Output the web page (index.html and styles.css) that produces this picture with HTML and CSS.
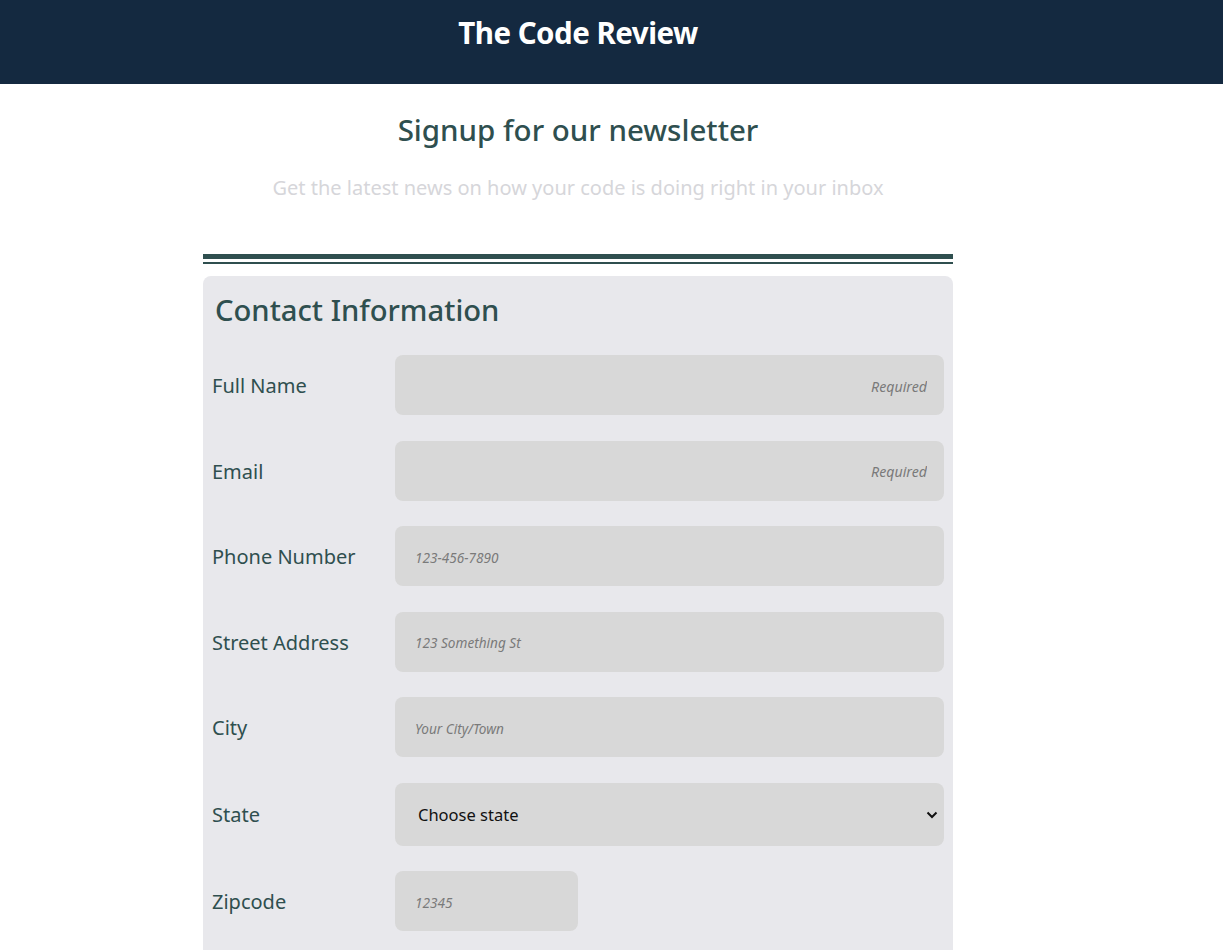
FILE: index.html
```html
<!DOCTYPE html>
<html lang="en">
<head>
<meta charset="utf-8">
<title>The Code Review</title>
<link rel="stylesheet" href="styles.css">
</head>
<body>
<header class="topbar">
  <div class="wrap">
    <h1 class="brand">The Code Review</h1>
  </div>
</header>
<main class="wrap">
  <section class="intro">
    <h2 class="intro-title">Signup for our newsletter</h2>
    <p class="intro-sub">Get the latest news on how your code is doing right in your inbox</p>
  </section>
  <div class="rule"></div>
  <form class="card">
    <h3 class="card-title">Contact Information</h3>
    <div class="row">
      <label class="label" for="name">Full Name</label>
      <input class="field req" id="name" type="text" placeholder="Required">
    </div>
    <div class="row">
      <label class="label" for="email">Email</label>
      <input class="field req" id="email" type="email" placeholder="Required">
    </div>
    <div class="row">
      <label class="label" for="phone">Phone Number</label>
      <input class="field" id="phone" type="tel" placeholder="123-456-7890">
    </div>
    <div class="row">
      <label class="label" for="street">Street Address</label>
      <input class="field" id="street" type="text" placeholder="123 Something St">
    </div>
    <div class="row">
      <label class="label" for="city">City</label>
      <input class="field" id="city" type="text" placeholder="Your City/Town">
    </div>
    <div class="row">
      <label class="label" for="state">State</label>
      <div class="select-wrap">
        <select class="field select" id="state">
          <option>Choose state</option>
        </select>
        <svg class="chev" width="12" height="8" viewBox="0 0 12 8"><path d="M1.5 1.5 L6 6 L10.5 1.5" fill="none" stroke="#111" stroke-width="2"/></svg>
      </div>
    </div>
    <div class="row">
      <label class="label" for="zip">Zipcode</label>
      <input class="field zip" id="zip" type="text" placeholder="12345">
    </div>
  </form>
</main>
</body>
</html>
```
FILE: styles.css
```css
* { box-sizing: border-box; }
html, body { margin: 0; padding: 0; background: #ffffff; }
body { font-family: "Noto Sans", "Open Sans", sans-serif; color: #2f4f4f; }

.wrap { width: 750px; margin-left: 203px; }

.topbar { background: #142940; height: 84px; }
.brand {
  margin: 0;
  padding-top: 12px;
  text-align: center;
  color: #ffffff;
  font-size: 29.5px;
  font-weight: 700;
  line-height: 41px;
  letter-spacing: -0.5px;
}

.intro { text-align: center; padding-top: 26px; height: 170px; }
.intro-title {
  margin: 0;
  font-size: 29.5px;
  font-weight: 500;
  line-height: 40px;
  color: #2f4f4f;
}
.intro-sub {
  margin: 24px 0 0;
  font-size: 20px;
  line-height: 28px;
  color: #d6d6da;
}

.rule {
  height: 10px;
  border-top: 5px solid #2f4f4f;
  border-bottom: 2px solid #2f4f4f;
}

.card {
  margin-top: 12px;
  background: #e8e8ec;
  border-radius: 8px 8px 0 0;
  padding: 14px 9px 20px 9px;
  min-height: 700px;
}
.card-title {
  margin: 0 0 25px 3px;
  font-size: 29.2px;
  font-weight: 500;
  line-height: 40px;
  color: #2f4f4f;
}

.row {
  display: flex;
  align-items: center;
  margin-bottom: 25.5px;
}
.label {
  width: 183px;
  font-size: 20px;
  line-height: 26px;
  padding-top: 2px;
  color: #2f4f4f;
}

.field {
  flex: 1;
  min-width: 0;
  height: 60px;
  border: none;
  border-radius: 8px;
  background: #d8d8d8;
  padding: 0 20px;
  font-family: "Noto Sans", sans-serif;
  font-size: 16.5px;
  color: #111;
  outline: none;
}
.field::placeholder {
  font-style: italic;
  font-size: 13.6px;
  color: #7a7a7a;
}
.req { text-align: right; padding-right: 17px; }
.req::placeholder { text-align: right; font-size: 14.2px; }

.select-wrap { flex: 1; position: relative; display: flex; }
.select {
  height: 63px;
  -webkit-appearance: none;
  appearance: none;
  padding-left: 23px;
  color: #111;
}
.chev { position: absolute; right: 6px; top: 28px; pointer-events: none; }

.zip { flex: 0 0 183px; width: 183px; }
```
